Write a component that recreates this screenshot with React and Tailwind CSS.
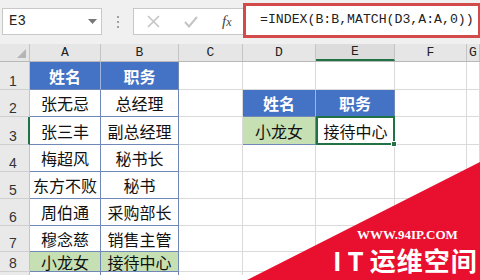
const cols = [
    { id: "A", w: "w-[71px]" },
    { id: "B", w: "w-[78px]" },
    { id: "C", w: "w-[64px]" },
    { id: "D", w: "w-[73px]" },
    { id: "E", w: "w-[79px]" },
    { id: "F", w: "w-[72px]" },
    { id: "G", w: "flex-1" },
];

const rows = [
    { n: 1, h: "h-[28px]", a: "姓名", b: "职务", head: true },
    { n: 2, h: "h-[27px]", a: "张无忌", b: "总经理" },
    { n: 3, h: "h-[28px]", a: "张三丰", b: "副总经理" },
    { n: 4, h: "h-[27px]", a: "梅超风", b: "秘书长" },
    { n: 5, h: "h-[27px]", a: "东方不败", b: "秘书" },
    { n: 6, h: "h-[27px]", a: "周伯通", b: "采购部长" },
    { n: 7, h: "h-[26px]", a: "穆念慈", b: "销售主管" },
    { n: 8, h: "h-[20px]", a: "小龙女", b: "接待中心", hit: true },
    { n: 9, h: "h-[20px]", a: "柯镇恶", b: "生产主管" },
];

const cjk = "font-['Noto_Sans_CJK_SC',sans-serif]";
const grid = "border-r border-b border-[#dadada]";
const tbl = "border-r border-b border-[#7088b8]";

function Cell({ className = "", children }) {
    return (
        <div className={`flex items-center justify-center leading-none ${className}`}>
            {children}
        </div>
    );
}

function App() {
    return (
        <main className="relative w-[480px] h-[280px] overflow-hidden bg-white">
            <div className="h-[275px] overflow-hidden flex flex-col">
                {/* formula bar */}
                <div className="h-[44px] shrink-0 bg-[#f0f0f0] flex items-center">
                    <div className="ml-[2px] w-[100px] h-[27px] bg-white border border-[#c8c8c8] flex items-center justify-between pl-[6px] pr-[4px] -mt-[1px]">
                        <span className="font-['Liberation_Mono',monospace] text-[14px] text-[#222]">E3</span>
                        <svg width="9" height="6" viewBox="0 0 9 6"><path d="M0 0h9L4.5 5z" fill="#777" /></svg>
                    </div>
                    <div className="w-[31px] flex flex-col items-center gap-[3px]">
                        <span className="w-[2px] h-[2px] bg-[#a0a0a0]" />
                        <span className="w-[2px] h-[2px] bg-[#a0a0a0]" />
                        <span className="w-[2px] h-[2px] bg-[#a0a0a0]" />
                    </div>
                    <div className="flex-1 h-[27px] -mt-[1px] bg-white border border-[#c8c8c8] flex items-center">
                        <div className="w-[109px] flex items-center pl-[13px] gap-[24px]">
                            <svg width="13" height="13" viewBox="0 0 13 13"><path d="M1 1l11 11M12 1L1 12" stroke="#c4c4c4" strokeWidth="1.6" /></svg>
                            <svg width="14" height="12" viewBox="0 0 14 12"><path d="M1 6l4 4.5L13 1" stroke="#c4c4c4" strokeWidth="2" fill="none" /></svg>
                            <span className="font-['Liberation_Serif',serif] italic text-[15px] text-[#444] leading-none">f<span className="text-[12px]">x</span></span>
                        </div>
                        <div className="flex-1 h-[35px] -mt-[3px] -mr-[2px] border-[3px] border-[#d24a4a] bg-white flex items-center pl-[14px]">
                            <span className="font-['Liberation_Mono',monospace] text-[13.2px] text-[#222] whitespace-nowrap">=INDEX(B:B,MATCH(D3,A:A,0))</span>
                        </div>
                    </div>
                </div>

                {/* column headers */}
                <div className="h-[18px] shrink-0 flex bg-[#e6e6e6] border-b border-[#b8b8b8]">
                    <div className="w-[30px] border-r border-[#c4c4c4] flex items-end justify-end p-[3px]">
                        <svg width="9" height="9" viewBox="0 0 9 9"><path d="M9 0v9H0z" fill="#b5b5b5" /></svg>
                    </div>
                    {cols.map((c) => (
                        <div
                            key={c.id}
                            className={`${c.w} flex items-center justify-center border-r border-[#c4c4c4] font-['Liberation_Mono',monospace] text-[13px] text-[#222] ${c.id === "E" ? "border-b-2 border-b-[#217346] bg-[#dcdcdc]" : ""}`}
                        >
                            {c.id}
                        </div>
                    ))}
                </div>

                {/* rows */}
                {rows.map((r) => (
                    <div key={r.n} className={`${r.h} shrink-0 flex ${cjk} text-[16px] text-[#111]`}>
                        <div className={`w-[30px] bg-[#e9e9e9] border-b border-[#cfcfcf] flex items-end pl-[9px] pb-[1px] font-['Liberation_Sans',sans-serif] text-[14px] text-[#333] leading-none ${r.n === 3 ? "border-r-2 border-r-[#217346]" : "border-r border-r-[#c4c4c4]"}`}>
                            {r.n}
                        </div>
                        {r.head ? (
                            <>
                                <Cell className="w-[71px] bg-[#4472c4] text-white font-bold border-r border-[#9db3e0] border-b border-b-[#7088b8]">{r.a}</Cell>
                                <Cell className="w-[78px] bg-[#4472c4] text-white font-bold border-r border-b border-[#7088b8]">{r.b}</Cell>
                            </>
                        ) : (
                            <>
                                <Cell className={`w-[71px] ${tbl} ${r.hit ? "bg-[#c6e0b4]" : ""}`}>{r.a}</Cell>
                                <Cell className={`w-[78px] ${tbl} ${r.hit ? "bg-[#c6e0b4]" : ""}`}>{r.b}</Cell>
                            </>
                        )}
                        <Cell className={`w-[64px] ${grid}`} />
                        {r.n === 2 && (
                            <>
                                <Cell className="w-[73px] bg-[#4472c4] text-white font-bold border-r border-[#9db3e0] border-b border-b-[#7088b8]">姓名</Cell>
                                <Cell className="w-[79px] bg-[#4472c4] text-white font-bold border-r border-b border-[#7088b8]">职务</Cell>
                            </>
                        )}
                        {r.n === 3 && (
                            <>
                                <Cell className={`w-[73px] bg-[#c6e0b4] ${tbl}`}>小龙女</Cell>
                                <Cell className="w-[79px] relative border-2 border-[#217346] -mt-[1px] h-[29px]">
                                    接待中心
                                    <span className="absolute -right-[4px] -bottom-[4px] w-[6px] h-[6px] bg-[#217346] border border-white" />
                                </Cell>
                            </>
                        )}
                        {r.n !== 2 && r.n !== 3 && (
                            <>
                                <Cell className={`w-[73px] ${grid}`} />
                                <Cell className={`w-[79px] ${grid}`} />
                            </>
                        )}
                        <Cell className={`w-[72px] ${grid}`} />
                        <Cell className={`flex-1 ${grid}`} />
                    </div>
                ))}
            </div>

            {/* watermark */}
            <svg className="absolute left-0 top-0" width="480" height="280" viewBox="0 0 480 280">
                <polygon points="247,280 480,162 480,280" fill="#e8102e" />
            </svg>
            <div className="absolute left-[357px] top-[228px] font-['Liberation_Serif',serif] font-bold text-[13px] text-white leading-none whitespace-nowrap">
                WWW.94IP.COM
            </div>
            <div className={`absolute left-[333px] top-[247px] ${cjk} font-bold text-[26px] tracking-[1px] text-white leading-none whitespace-nowrap`}>
                <span className="tracking-[6px]">IT</span>运维空间
            </div>
        </main>
    );
}

export default App
